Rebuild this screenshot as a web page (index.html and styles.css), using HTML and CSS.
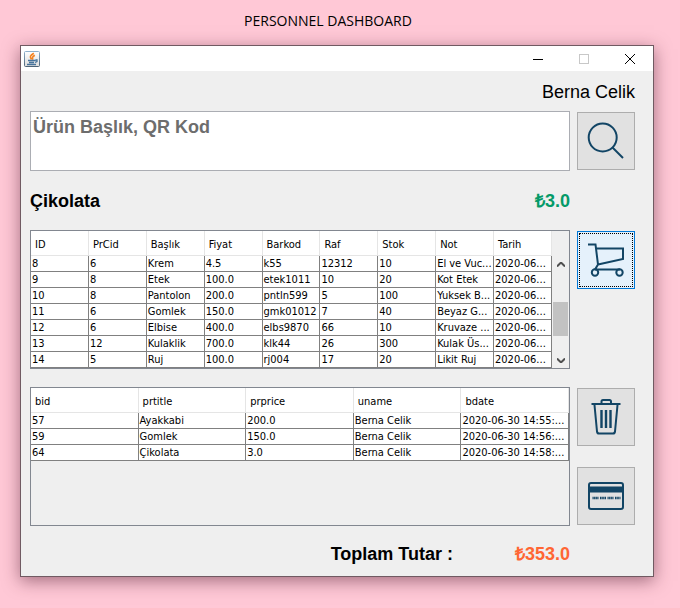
FILE: index.html
```
<!DOCTYPE html>
<html lang="tr">
<head>
<meta charset="utf-8">
<title>Personnel Dashboard</title>
<link rel="stylesheet" href="styles.css">
</head>
<body>
<h1 class="page-title">PERSONNEL DASHBOARD</h1>
<main class="window">
  <header class="titlebar">
    <svg class="app-icon" viewBox="0 0 16 16" aria-hidden="true">
      <defs>
        <linearGradient id="frame" x1="0" y1="0" x2="0" y2="1"><stop offset="0" stop-color="#8fb0cc"/><stop offset="1" stop-color="#4d6377"/></linearGradient>
        <linearGradient id="face" x1="0" y1="0" x2="0" y2="1"><stop offset="0" stop-color="#fff"/><stop offset="1" stop-color="#dcdcdc"/></linearGradient>
      </defs>
      <rect x=".5" y=".5" width="15" height="15" rx="1" fill="url(#face)" stroke="url(#frame)"/>
      <path d="M9.800 2.300C6 4.600 5.500 6 7.500 8.600M10.800 4.300C8 6 8 7 9 8.600" fill="none" stroke="#f5821f" stroke-width="1.600"/>
      <path d="M4 9.500h7.500M5 11.500h5M3 13.500h9M11.500 9h1.500v1.500l-2 1" fill="none" stroke="#47739b" stroke-width="1.300"/>
    </svg>
    <div class="window-controls">
      <button class="control" aria-label="Minimize"><svg viewBox="0 0 10 10"><path d="M0 5.500h10"/></svg></button>
      <button class="control" aria-label="Maximize" disabled><svg viewBox="0 0 10 10"><path d="M.5.5h9v9h-9z"/></svg></button>
      <button class="control" aria-label="Close"><svg class="smooth" viewBox="0 0 10 10"><path d="M0 0l10 10M10 0L0 10"/></svg></button>
    </div>
  </header>
  <div class="content">
    <div class="user">Berna Celik</div>

    <textarea class="search" aria-label="Ürün Başlık, QR Kod" placeholder="Ürün Başlık, QR Kod"></textarea>
    <div class="side">
      <button class="tool" aria-label="Ara"><svg viewBox="0 0 56 56"><circle cx="24.700" cy="24.500" r="14"/><path d="M34.500 34.500l10.500 10.500"/></svg></button>
    </div>

    <div class="selected"><span>Çikolata</span><span class="price">₺3.0</span></div>

    <div class="pane with-scroll">
      <table>
        <thead><tr><th>ID</th><th>PrCid</th><th>Başlık</th><th>Fiyat</th><th>Barkod</th><th>Raf</th><th>Stok</th><th>Not</th><th>Tarih</th></tr></thead>
        <tbody>
          <tr><td>8</td><td>6</td><td>Krem</td><td>4.5</td><td>k55</td><td>12312</td><td>10</td><td>El ve Vuc...</td><td>2020-06...</td></tr>
          <tr><td>9</td><td>8</td><td>Etek</td><td>100.0</td><td>etek1011</td><td>10</td><td>20</td><td>Kot Etek</td><td>2020-06...</td></tr>
          <tr><td>10</td><td>8</td><td>Pantolon</td><td>200.0</td><td>pntln599</td><td>5</td><td>100</td><td>Yuksek B...</td><td>2020-06...</td></tr>
          <tr><td>11</td><td>6</td><td>Gomlek</td><td>150.0</td><td>gmk01012</td><td>7</td><td>40</td><td>Beyaz G...</td><td>2020-06...</td></tr>
          <tr><td>12</td><td>6</td><td>Elbise</td><td>400.0</td><td>elbs9870</td><td>66</td><td>10</td><td>Kruvaze ...</td><td>2020-06...</td></tr>
          <tr><td>13</td><td>12</td><td>Kulaklik</td><td>700.0</td><td>klk44</td><td>26</td><td>300</td><td>Kulak Üs...</td><td>2020-06...</td></tr>
          <tr><td>14</td><td>5</td><td>Ruj</td><td>100.0</td><td>rj004</td><td>17</td><td>20</td><td>Likit Ruj</td><td>2020-06...</td></tr>
        </tbody>
      </table>
      <div class="scrollbar" aria-hidden="true">
        <svg viewBox="0 0 8 5"><path d="M0 4.500L4 .5l4 4"/></svg>
        <div class="track"><div class="thumb"></div></div>
        <svg viewBox="0 0 8 5"><path d="M0 .5l4 4 4-4"/></svg>
      </div>
    </div>
    <div class="side">
      <button class="tool focused" aria-label="Sepete ekle"><svg viewBox="0 0 56 56"><path d="M10 12.500h7.500l2.500 20-3 5M18.500 16.500H45v10.500L20 32.500M17 37.500h25"/><circle cx="17" cy="40.500" r="3.200"/><circle cx="41.500" cy="40.500" r="3.200"/></svg></button>
    </div>

    <div class="pane">
      <table>
        <thead><tr><th>bid</th><th>prtitle</th><th>prprice</th><th>uname</th><th>bdate</th></tr></thead>
        <tbody>
          <tr><td>57</td><td>Ayakkabi</td><td>200.0</td><td>Berna Celik</td><td>2020-06-30 14:55:...</td></tr>
          <tr><td>59</td><td>Gomlek</td><td>150.0</td><td>Berna Celik</td><td>2020-06-30 14:56:...</td></tr>
          <tr><td>64</td><td>Çikolata</td><td>3.0</td><td>Berna Celik</td><td>2020-06-30 14:58:...</td></tr>
        </tbody>
      </table>
    </div>
    <div class="side">
      <button class="tool" aria-label="Sil"><svg viewBox="0 0 56 56"><path d="M13.500 15h29M23.500 14.500v-2q0-1.500 1.500-1.500h6.500q1.500 0 1.500 1.500v2M16.500 16l2.500 26.500q.3 2 2 2h14q1.700 0 2-2L39.500 16"/><path d="M23.500 21v18M28 21v18M32.500 21v18" stroke-width="2.400"/></svg></button>
      <button class="tool" aria-label="Öde"><svg viewBox="0 0 56 56"><rect x="11" y="15" width="34" height="26" rx="2"/><path d="M11 21.500h34" stroke-width="6"/><path d="M14.500 30h28" stroke-dasharray="1.200 .4 1.200 .4 1.200 .4 1.200 1.500" stroke-width="2.500"/></svg></button>
    </div>

    <div class="total"><span>Toplam Tutar :</span><span class="amount">₺353.0</span></div>
  </div>
</main>
</body>
</html>
```

FILE: styles.css
```
* { box-sizing: border-box; }

body {
  margin: 0;
  padding: 0 26px 31px 20px;
  background: #ffc8d6;
  color: #000;
  font-family: "Liberation Sans", Arial, sans-serif;
  font-size: 18px;
}

.page-title {
  margin: 0;
  padding: 10px 18px 13px 0;
  font: 400 14px/22px "Open Sans", sans-serif;
  text-align: center;
}

.window {
  border: 1px solid #705a62;
  background: #efefef;
  box-shadow: 0 4px 16px rgba(70, 20, 40, 0.5);
}

.titlebar {
  display: flex;
  align-items: center;
  justify-content: space-between;
  height: 25px;
  padding-left: 3px;
  background: #fff;
}

.app-icon { width: 16px; height: 16px; }

.window-controls { display: flex; }

.control {
  width: 46px;
  height: 25px;
  padding: 0;
  border: 0;
  background: none;
  line-height: 0;
}

.control svg {
  width: 10px;
  height: 10px;
  fill: none;
  stroke: #000;
  shape-rendering: crispEdges;
}

.control svg.smooth { shape-rendering: auto; }
.control:disabled svg { stroke: #c8c8c8; }

.content {
  display: grid;
  grid-template-columns: 1fr 58px;
  column-gap: 7px;
  padding: 0 18px 0 9px;
}

.user {
  grid-column: 1 / -1;
  height: 40px;
  line-height: 42px;
  text-align: right;
}

.search {
  display: block;
  width: 100%;
  height: 60px;
  padding: 4px 2px;
  border: 1px solid #abadb3;
  background: #fff;
  font: bold 18px/22px "Liberation Sans", Arial, sans-serif;
  resize: none;
}

.search::placeholder { color: #6d6d6d; opacity: 1; }

.side {
  display: flex;
  flex-direction: column;
  gap: 21px;
  padding-top: 1px;
}

.tool {
  width: 58px;
  height: 58px;
  padding: 0;
  border: 1px solid #adadad;
  background: #e1e1e1;
}

.tool svg {
  display: block;
  width: 56px;
  height: 56px;
  fill: none;
  stroke: #124565;
  stroke-width: 2;
}

.focused {
  border-color: #0078d7;
  background: #e5f1fb;
  outline: 1px dotted #000;
  outline-offset: -3px;
}

.selected,
.total {
  display: flex;
  grid-column: 1;
  justify-content: space-between;
  font-weight: bold;
}

.selected { height: 59px; line-height: 61px; }

.total {
  justify-content: flex-end;
  gap: 62px;
  height: 50px;
  line-height: 56px;
}

.price { color: #049a68; }
.amount { color: #ff6633; }

.pane {
  grid-column: 1;
  height: 139px;
  border: 1px solid #828790;
  overflow: hidden;
}

.pane + .side + .pane,
.pane + .side + .pane + .side { margin-top: 18px; }

.with-scroll { display: flex; }

table {
  width: 100%;
  table-layout: fixed;
  border-collapse: separate;
  border-spacing: 0;
  font: 11px/15px "DejaVu Sans Condensed", Tahoma, sans-serif;
}

th,
td {
  padding: 0 0 0 1px;
  border-right: 1px solid #808080;
  border-bottom: 1px solid #808080;
  background: #fff;
  text-align: left;
  white-space: nowrap;
  overflow: hidden;
}

th {
  height: 25px;
  padding: 2px 0 0 4px;
  border-color: #e5e5e5;
  font-weight: normal;
}

td { height: 16px; }

.scrollbar {
  flex: 0 0 17px;
  display: flex;
  flex-direction: column;
  align-items: center;
  padding: 31px 0 5px;
}

.scrollbar svg {
  width: 8px;
  height: 5px;
  fill: none;
  stroke: #505050;
  stroke-width: 2;
}

.track { flex: 1; width: 15px; padding-top: 35px; }
.thumb { height: 34px; background: #c2c2c2; }
```
